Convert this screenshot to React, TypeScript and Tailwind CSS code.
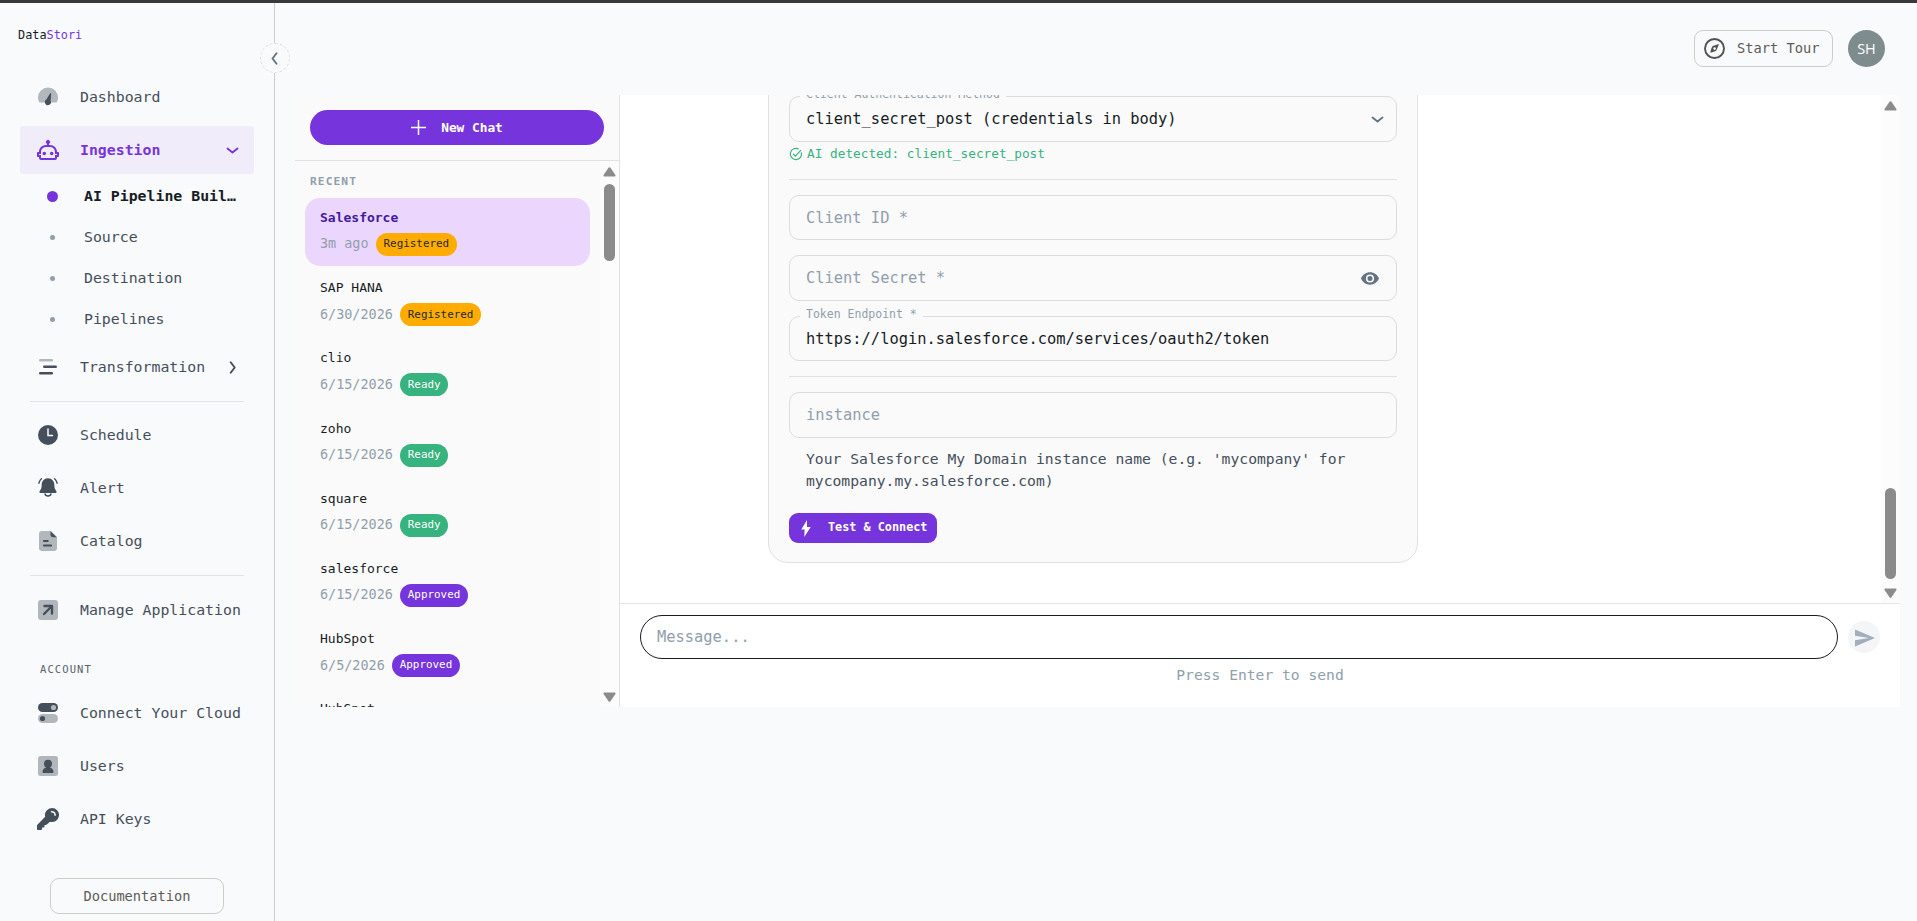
import type { ReactNode } from "react";

type Status = "Registered" | "Ready" | "Approved";

interface Chat {
  name: string;
  when: string;
  status: Status;
}

const chats: Chat[] = [
  { name: "Salesforce", when: "3m ago", status: "Registered" },
  { name: "SAP HANA", when: "6/30/2026", status: "Registered" },
  { name: "clio", when: "6/15/2026", status: "Ready" },
  { name: "zoho", when: "6/15/2026", status: "Ready" },
  { name: "square", when: "6/15/2026", status: "Ready" },
  { name: "salesforce", when: "6/15/2026", status: "Approved" },
  { name: "HubSpot", when: "6/5/2026", status: "Approved" },
  { name: "HubSpot", when: "6/5/2026", status: "Approved" },
];

const statusStyles: Record<Status, string> = {
  Registered: "bg-[#ffab00] text-[#212b36]",
  Ready: "bg-[#36b37e] text-white",
  Approved: "bg-[#7635dc] text-white",
};

function Icon({ children }: { children: ReactNode }) {
  return (
    <svg width="20" height="20" viewBox="0 0 20 20" fill="none" className="shrink-0">
      {children}
    </svg>
  );
}

const icons = {
  dashboard: (
    <Icon>
      <path d="M1.500 15.500C.5 14 0 12 0 10.500a10 10 0 0 1 20 0c0 1.500-.5 3.500-1.500 5z" fill="#b2b7bc" />
      <path d="M12 6.600 8.400 12.600a3 3 0 1 0 4.200 1.200l.6-6.700c.1-.7-.8-1.100-1.200-.5z" fill="#454f5b" />
    </Icon>
  ),
  robot: (
    <svg width="24" height="24" viewBox="0 0 24 24" className="shrink-0" fill="#7635dc">
      <path d="M17.500 15.500a1.800 1.800 0 1 1-3.600 0 1.800 1.800 0 0 1 3.600 0zM10.100 15.500a1.800 1.800 0 1 1-3.600 0 1.800 1.800 0 0 1 3.600 0zM22 14h-1c0-3.870-3.130-7-7-7h-1V5.730A2 2 0 1 0 11 5.730V7h-1c-3.870 0-7 3.130-7 7H2c-.55 0-1 .45-1 1v3c0 .55.45 1 1 1h1v1a2 2 0 0 0 2 2h14a2 2 0 0 0 2-2v-1h1c.55 0 1-.45 1-1v-3c0-.55-.45-1-1-1m-1 3h-2v3H5v-3H3v-1h2v-2c0-2.760 2.240-5 5-5h4c2.760 0 5 2.240 5 5v2h2z" />
    </svg>
  ),
  transformation: (
    <Icon>
      <rect x="1" y="2" width="14" height="2.500" rx="1.250" fill="#b2b7bc" />
      <rect x="5" y="8.500" width="14" height="2.500" rx="1.250" fill="#454f5b" />
      <rect x="1" y="15" width="14" height="2.500" rx="1.250" fill="#454f5b" />
    </Icon>
  ),
  schedule: (
    <Icon>
      <circle cx="10" cy="10" r="10" fill="#454f5b" />
      <path d="M10 4v6.400h4.500" stroke="#f9fafb" strokeWidth="1.500" strokeLinecap="round" />
    </Icon>
  ),
  alert: (
    <Icon>
      <path
        d="M10 .3c-4 0-6.300 3-6.300 6.500 0 3.200-.7 4.700-2 6.200-.7.800-.3 1.900.8 1.900h15c1.100 0 1.500-1.100.8-1.900-1.300-1.500-2-3-2-6.200C16.300 3.300 14 .3 10 .3z"
        fill="#454f5b"
      />
      <path d="M6.800 15.500a3.300 3.300 0 0 0 6.400 0" stroke="#454f5b" strokeWidth="1.500" />
      <path d="M3.400.8C2 2 1.300 3.400.8 5.200M16.600.8c1.400 1.200 2.100 2.600 2.600 4.400" stroke="#454f5b" strokeWidth="1.400" strokeLinecap="round" />
    </Icon>
  ),
  catalog: (
    <Icon>
      <path d="M4 0h9l6 6v11a3 3 0 0 1-3 3H4a3 3 0 0 1-3-3V3a3 3 0 0 1 3-3z" fill="#b2b7bc" />
      <path d="M12.500.3v3.200c0 1.700 1 2.800 2.700 2.800h3.500z" fill="#454f5b" />
      <path d="M5.800 10h4M5.800 14.500h7.400" stroke="#454f5b" strokeWidth="1.800" strokeLinecap="round" />
    </Icon>
  ),
  manage: (
    <Icon>
      <rect width="20" height="20" rx="3" fill="#b2b7bc" />
      <path d="M6 14l7.500-7.500M6.500 6h7.500v7.500" stroke="#454f5b" strokeWidth="2.400" strokeLinecap="round" strokeLinejoin="round" />
    </Icon>
  ),
  cloud: (
    <Icon>
      <rect width="20" height="9" rx="4.500" fill="#454f5b" />
      <circle cx="15.500" cy="4.500" r="2.600" fill="#b2b7bc" />
      <rect y="11" width="20" height="9" rx="4.500" fill="#b2b7bc" />
      <circle cx="4.500" cy="15.500" r="2.600" fill="#454f5b" />
    </Icon>
  ),
  users: (
    <Icon>
      <rect width="20" height="20" rx="2.500" fill="#b2b7bc" />
      <circle cx="10" cy="7.800" r="4" fill="#454f5b" />
      <path d="M7.800 10h4.400v1.800c2 .5 3.300 1.900 3.300 4.200 0 .6-.3.900-.8.900H5.300c-.5 0-.8-.3-.8-.9 0-2.300 1.300-3.700 3.300-4.200z" fill="#454f5b" />
    </Icon>
  ),
  keys: (
    <svg width="22" height="22" viewBox="0 0 22 22" className="shrink-0" fill="none">
      <path
        d="M15 0a7 7 0 0 0-6.800 8.800L.6 16.400c-.4.400-.6.800-.6 1.300V21c0 .6.400 1 1 1h3c.6 0 1-.4 1-1v-1.500h1.500c.6 0 1-.4 1-1V17h1.300c.4 0 .7-.1 1-.4L13 13.700A7 7 0 1 0 15 0z"
        fill="#454f5b"
      />
      <path d="M14.500 3.800c2 0 3.600 1.500 3.600 3.500" stroke="#f9fafb" strokeWidth="1.500" strokeLinecap="round" />
    </svg>
  ),
};

function Chevron({ className }: { className?: string }) {
  return (
    <svg width="13" height="7" viewBox="0 0 13 7" fill="none" className={className}>
      <path
        d="M1.500 1.500 6.500 5.500 11.500 1.500"
        stroke="currentColor"
        strokeWidth="1.900"
        strokeLinecap="round"
        strokeLinejoin="round"
      />
    </svg>
  );
}

function SideChevron({ left }: { left?: boolean }) {
  return (
    <svg width="7" height="13" viewBox="0 0 7 13" fill="none">
      <path
        d={left ? "M5.500 1.200 1.500 6.500 5.500 11.800" : "M1.700 1.200 5.700 6.500 1.700 11.800"}
        stroke="currentColor"
        strokeWidth="1.900"
        strokeLinecap="round"
        strokeLinejoin="round"
      />
    </svg>
  );
}

function NavItem({ icon, label, active, end }: { icon: ReactNode; label: string; active?: boolean; end?: ReactNode }) {
  return (
    <div
      className={`mx-5 flex h-12 shrink-0 items-center rounded-[3px] text-[14.850px] ${
        active ? "bg-[#f1ecf9] font-bold text-[#7635dc]" : "text-[#454f5b]"
      }`}
    >
      <span className="ml-4 flex w-6 justify-center">{icon}</span>
      <span className="ml-5 whitespace-nowrap">{label}</span>
      {end && <span className="mr-[8px] ml-auto flex w-[27px] justify-center">{end}</span>}
    </div>
  );
}

function SubItem({ label, active }: { label: string; active?: boolean }) {
  return (
    <div className="flex h-[41px] items-center text-[14.850px] text-[#454f5b]">
      <span className="ml-[42px] flex w-[21px] justify-center">
        <span className={active ? "size-[11px] rounded-full bg-[#7635dc]" : "size-[5px] rounded-full bg-[#919eab]"} />
      </span>
      <span className={`ml-[21px] ${active ? "font-bold text-[#161c24]" : ""}`}>{label}</span>
    </div>
  );
}

function Sidebar() {
  return (
    <aside className="relative flex w-[275px] shrink-0 flex-col border-r border-[#d0ccc6]">
      <div className="mt-[20px] ml-[18px] h-6 text-[11.850px] leading-6 text-[#161c24]">
        Data<span className="text-[#7635dc]">Stori</span>
      </div>
      <nav className="mt-[26px] flex flex-col">
        <NavItem icon={icons.dashboard} label="Dashboard" />
        <div className="h-[5px]" />
        <NavItem icon={icons.robot} label="Ingestion" active end={<Chevron />} />
        <div className="mt-[2px] mb-[3px]">
          <SubItem label="AI Pipeline Buil…" active />
          <SubItem label="Source" />
          <SubItem label="Destination" />
          <SubItem label="Pipelines" />
        </div>
        <NavItem icon={icons.transformation} label="Transformation" end={<SideChevron />} />
        <hr className="mx-[30px] mt-[10px] mb-[9px] border-[#dfe3e8]" />
        <div className="flex flex-col gap-[5px]">
          <NavItem icon={icons.schedule} label="Schedule" />
          <NavItem icon={icons.alert} label="Alert" />
          <NavItem icon={icons.catalog} label="Catalog" />
        </div>
        <hr className="mx-[30px] mt-[10px] mb-[10px] border-[#dfe3e8]" />
        <NavItem icon={icons.manage} label="Manage Application" />
        <p className="mt-[25px] mb-[10px] ml-10 h-5 text-[10.500px] leading-5 tracking-[1.100px] text-[#56616d]">ACCOUNT</p>
        <div className="flex flex-col gap-[5px]">
          <NavItem icon={icons.cloud} label="Connect Your Cloud" />
          <NavItem icon={icons.users} label="Users" />
          <NavItem icon={icons.keys} label="API Keys" />
        </div>
      </nav>
      <button className="mt-[35px] ml-[50px] h-9 w-[174px] rounded-[9px] border border-[#d0ccc6] text-[13.700px] text-[#5d5a55]">
        Documentation
      </button>
      <button className="absolute top-10 -right-[15.500px] flex size-[30px] items-center justify-center rounded-full border border-dashed border-[#dcdfe3] bg-[#f9fafb] text-[#637381]">
        <SideChevron left />
      </button>
    </aside>
  );
}

function Scrollbar({ thumb }: { thumb: string }) {
  return (
    <div className="flex w-[19px] shrink-0 flex-col items-center bg-[#fcfcfc] py-[5px] text-[#8b8b8b]">
      <svg width="13" height="10" viewBox="0 0 13 10" className="mt-px shrink-0" fill="currentColor">
        <path d="M5.500.8.600 8c-.4.700-.1 1.500.7 1.500h10.400c.8 0 1.100-.8.700-1.500L7.500.8c-.5-.7-1.500-.7-2 0z" />
      </svg>
      <div className={`w-[11px] shrink-0 rounded-full bg-[#8b8b8b] ${thumb}`} />
      <svg width="13" height="10" viewBox="0 0 13 10" className="mt-auto shrink-0" fill="currentColor">
        <path d="M5.500 9.200.6 2C.2 1.300.5.500 1.300.500h10.400c.8 0 1.100.8.700 1.500L7.500 9.200c-.5.700-1.500.7-2 0z" />
      </svg>
    </div>
  );
}

function ChatList() {
  return (
    <section className="flex w-[325px] shrink-0 flex-col border-r border-[#dfe1e4] bg-[#fafafa]">
      <div className="border-b border-[#dfe1e4] px-[15px] pt-[15px] pb-[15px]">
        <button className="flex h-[35px] w-[294px] items-center justify-center rounded-full bg-[#7635dc] text-[12.800px] font-bold text-white">
          <svg width="15" height="15" viewBox="0 0 15 15" className="mr-[15px]" stroke="currentColor" strokeWidth="1.500">
            <path d="M7.500 0v15M0 7.500h15" />
          </svg>
          New Chat
        </button>
      </div>
      <div className="flex min-h-0 flex-1">
        <div className="flex-1 overflow-hidden pl-[10px]">
          <p className="mt-[11px] ml-[5px] h-5 text-[11.200px] leading-5 font-bold tracking-[1.100px] text-[#919eab]">RECENT</p>
          <ul className="mt-[6px] flex flex-col gap-[2.200px]">
            {chats.map((chat, i) => (
              <li
                key={i}
                className={`h-[68px] w-[285px] rounded-[15px] pt-[10px] pl-[15px] text-[13px] ${
                  i === 0 ? "bg-[#ebd6fd]" : ""
                }`}
              >
                <p className={`h-5 leading-5 ${i === 0 ? "font-bold text-[#431a9e]" : "text-[#161c24]"}`}>{chat.name}</p>
                <div className="mt-[5px] flex h-[23px] items-center gap-[7.500px]">
                  <span className="text-[13.450px] text-[#919eab]">{chat.when}</span>
                  <span className={`flex h-[23px] items-center rounded-full px-[7.500px] text-[10.900px] ${statusStyles[chat.status]}`}>
                    {chat.status}
                  </span>
                </div>
              </li>
            ))}
          </ul>
        </div>
        <Scrollbar thumb="mt-[7px] h-[77px]" />
      </div>
    </section>
  );
}

function Field({
  label,
  value,
  end,
  className,
}: {
  label: string;
  value?: string;
  end?: ReactNode;
  className?: string;
}) {
  return (
    <div className={`relative flex items-center rounded-[10px] border border-[#dadce1] pr-[13px] pl-4 text-[15.400px] ${className}`}>
      {value ? (
        <>
          <span className="absolute -top-[11px] left-[10px] h-5 bg-[#fafafa] pr-1.5 pl-[6px] text-[11.500px] leading-4 text-[#919eab]">
            {label}
          </span>
          <span className="pt-[2px] text-[#161c24]">{value}</span>
        </>
      ) : (
        <span className="pt-[2px] text-[#919eab]">{label}</span>
      )}
      {end && <span className="ml-auto">{end}</span>}
    </div>
  );
}

function CredentialsCard() {
  return (
    <div className="ml-[148px] flex w-[650px] flex-col rounded-[20px] border border-[#dfe1e4] bg-[#fafafa] px-5 pt-10 pb-[19px]">
      <Field
        label="Client Authentication Method"
        value="client_secret_post (credentials in body)"
        className="h-[46px]"
        end={<Chevron className="-mr-[1px] text-[#637381]" />}
      />
      <p className="mt-[2px] flex h-5 items-center text-[12.750px] text-[#36b37e]">
        <svg width="14" height="14" viewBox="0 0 14 14" fill="none" stroke="currentColor" strokeWidth="1.200" className="mr-[4px]">
          <path d="M12.300 5.400A5.600 5.600 0 1 1 9.700 2.100" />
          <path d="M4 6.800 6.300 9.100 12 3.200" />
        </svg>
        AI detected: client_secret_post
      </p>
      <hr className="mt-[15px] border-[#dfe1e4]" />
      <Field label="Client ID *" className="mt-[15px] h-[45px]" />
      <Field
        label="Client Secret *"
        className="mt-[15px] h-[46px]"
        end={
          <svg width="18" height="13" viewBox="0 0 18 13" className="mr-1">
            <path
              fill="#637381"
              fillRule="evenodd"
              d="M9 .3C5 .3 1.500 2.800 0 6.500c1.500 3.700 5 6.200 9 6.200s7.500-2.500 9-6.200C16.500 2.800 13 .3 9 .3zM9 10.600a4.100 4.100 0 1 1 0-8.200 4.100 4.100 0 0 1 0 8.200zM9 4a2.500 2.500 0 1 0 0 5 2.500 2.500 0 0 0 0-5z"
            />
          </svg>
        }
      />
      <Field label="Token Endpoint *" value="https://login.salesforce.com/services/oauth2/token" className="mt-[15px] h-[45px]" />
      <hr className="mt-[15px] border-[#dfe1e4]" />
      <Field label="instance" className="mt-[15px] h-[46px]" />
      <p className="mt-[10px] ml-[17px] text-[14.700px] leading-[22px] text-[#454f5b]">
        Your Salesforce My Domain instance name (e.g. 'mycompany' for
        <br />
        mycompany.my.salesforce.com)
      </p>
      <button className="mt-[21px] flex h-[30px] w-[148px] items-center rounded-[9px] bg-[#7635dc] text-[11.800px] font-bold text-white">
        <svg width="10" height="17" viewBox="0 0 10 17" className="mr-[17px] ml-[12px]" fill="currentColor">
          <path d="M6 0 .3 9.500h3.300L3.300 17 9.700 7H6z" />
        </svg>
        Test &amp; Connect
      </button>
    </div>
  );
}

function Conversation() {
  return (
    <section className="flex min-w-0 flex-1 flex-col bg-white">
      <div className="flex h-[508px]">
        <div className="flex flex-1 flex-col justify-end overflow-hidden pb-[40px]">
          <CredentialsCard />
        </div>
        <Scrollbar thumb="mt-[377px] h-[91px]" />
      </div>
      <div className="flex-1 border-t border-[#e3e5e8] pt-[11px]">
        <div className="flex items-center pl-5">
          <div className="flex h-11 w-[1198px] items-center rounded-full border border-[#161c24] pt-[2px] pl-4 text-[15.400px] text-[#919eab]">
            Message...
          </div>
          <button className="ml-[10px] flex size-8 items-center justify-center rounded-full bg-[#f4f5f7]">
            <svg width="20" height="18" viewBox="0 0 20 18" className="mt-px ml-px" fill="#a3aebc">
              <path d="M0 .5v6.300L14 9 0 11.200v6.300L20 9z" />
            </svg>
          </button>
        </div>
        <p className="mt-[5px] text-center text-[14.650px] leading-[22px] text-[#919eab]">Press Enter to send</p>
      </div>
    </section>
  );
}

export default function App() {
  return (
    <div className="flex h-[921px] w-[1917px] flex-col overflow-hidden bg-[#f9fafc] font-['DejaVu_Sans_Mono',monospace]">
      <div className="h-[3px] shrink-0 bg-[#3a3a3e]" />
      <div className="flex min-h-0 flex-1">
        <Sidebar />
        <main className="flex min-w-0 flex-1 flex-col pr-[17px] pl-5">
          <header className="flex h-[92px] shrink-0 items-start justify-end pt-[27px] pr-[15px]">
            <button className="mr-[15px] flex h-[37px] w-[139px] items-center rounded-[9px] border border-[#d0ccc6] text-[13.700px] text-[#5d5a55]">
              <svg width="21" height="21" viewBox="0 0 21 21" fill="none" className="mr-[12px] ml-[9px]">
                <circle cx="10.500" cy="10.500" r="9.500" stroke="#54524e" strokeWidth="1.900" />
                <path
                  fillRule="evenodd"
                  d="M15 6 8.700 8.100C7.500 9.500 6.700 12.500 6.300 14.800c2.300-.4 5-1.200 6.200-2.500zM10.600 9.300a1.300 1.300 0 1 1 0 2.600 1.300 1.300 0 0 1 0-2.600z"
                  fill="#54524e"
                />
              </svg>
              Start Tour
            </button>
            <div className="flex size-[37px] items-center justify-center rounded-full bg-[#7f8c8d] font-['Open_Sans','Lato',sans-serif] text-[14.500px] text-white">
              SH
            </div>
          </header>
          <div className="flex h-[612px] shrink-0">
            <ChatList />
            <Conversation />
          </div>
        </main>
      </div>
    </div>
  );
}
